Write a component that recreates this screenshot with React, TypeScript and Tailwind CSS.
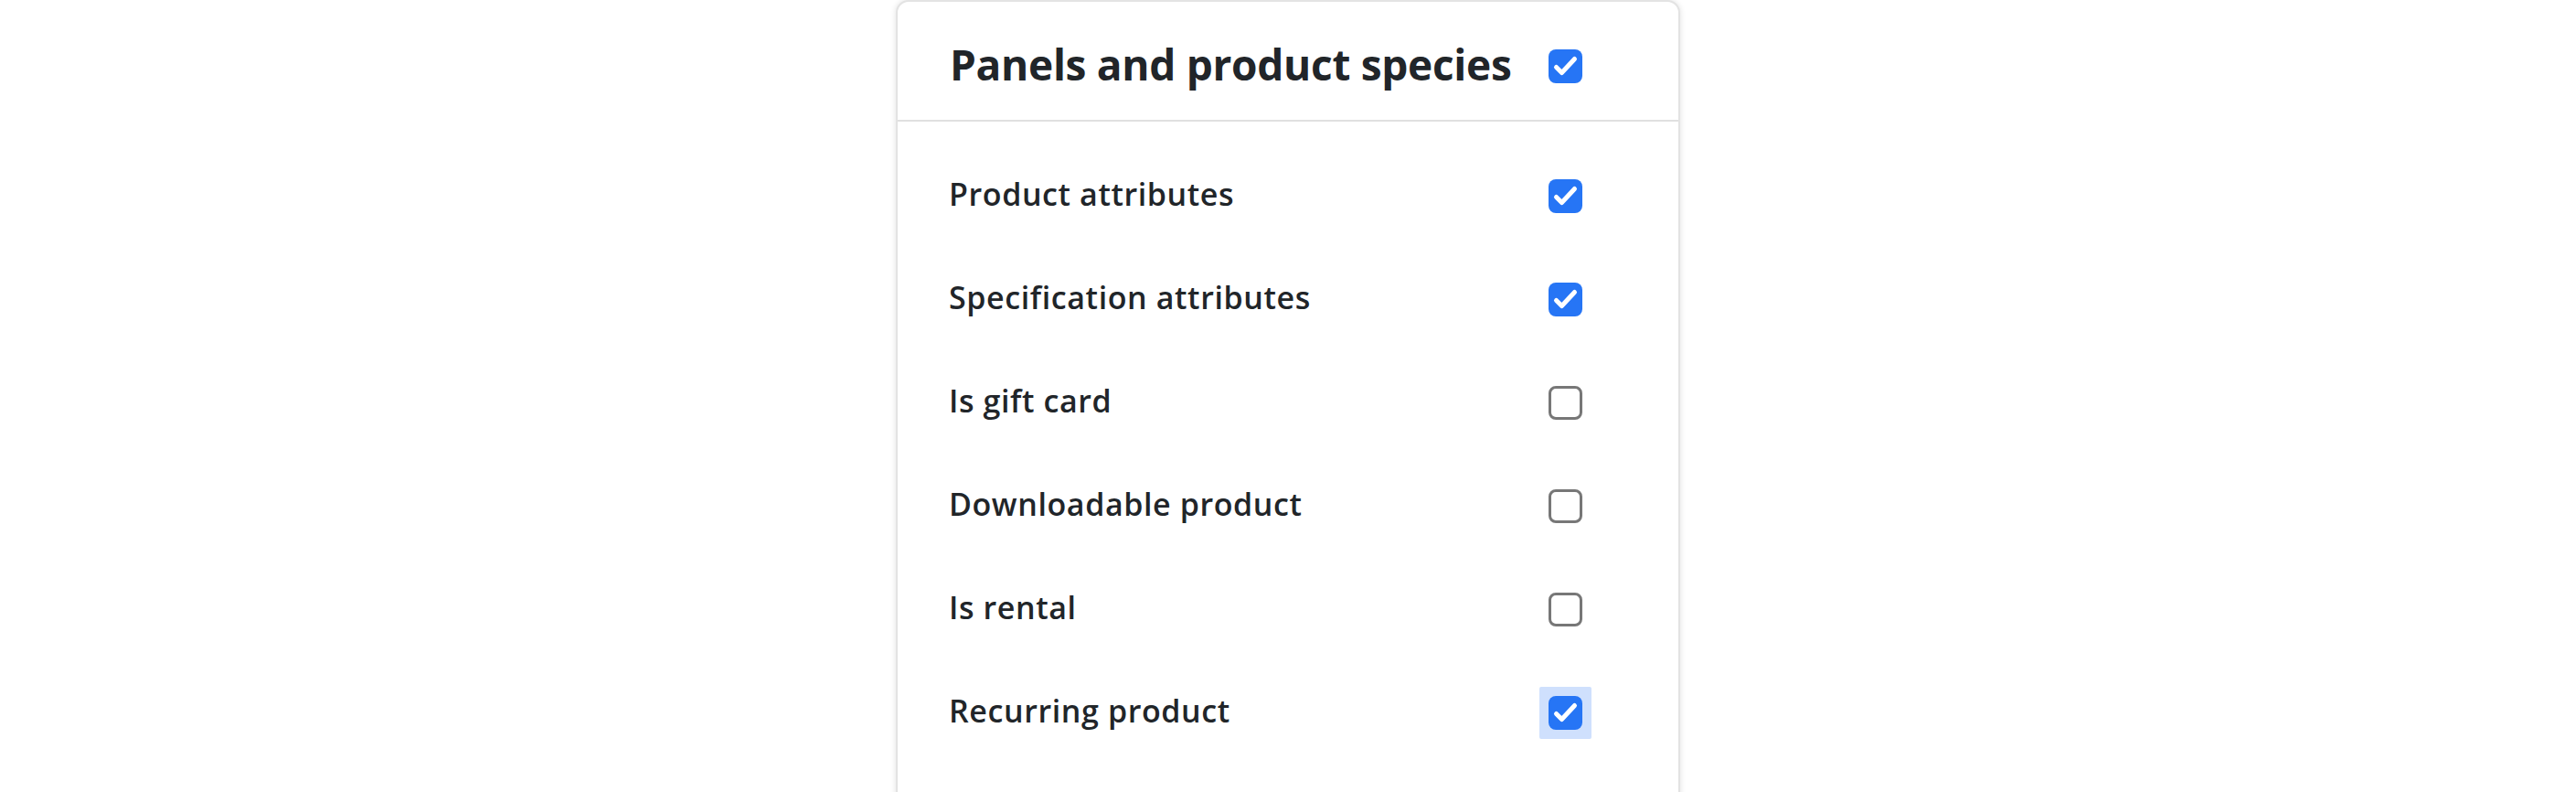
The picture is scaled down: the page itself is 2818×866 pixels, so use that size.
import { useState } from "react";

const rows = [
  { label: "Product attributes", checked: true },
  { label: "Specification attributes", checked: true },
  { label: "Is gift card", checked: false },
  { label: "Downloadable product", checked: false },
  { label: "Is rental", checked: false },
  { label: "Recurring product", checked: true, focused: true },
];

function Check({ checked, focused, onClick }: { checked: boolean; focused?: boolean; onClick: () => void }) {
  const box = (
    <button
      onClick={onClick}
      className={`w-[37px] h-[37px] shrink-0 rounded-[8px] flex items-center justify-center ${
        checked ? "bg-[#2675f5]" : "bg-white border-[3px] border-[#777777]"
      }`}
    >
      {checked && (
        <svg viewBox="0 0 37 37" className="w-[37px] h-[37px]" fill="none">
          <path d="M8.5 19.5L14.5 25.5L28.5 10.5" stroke="#fff" strokeWidth={5} strokeLinecap="round" strokeLinejoin="round" />
        </svg>
      )}
    </button>
  );
  if (!focused) return box;
  return <span className="-m-[10px] p-[10px] bg-[#cfe0fd] rounded-[2px] flex">{box}</span>;
}

export default function App() {
  const [all, setAll] = useState(true);
  const [items, setItems] = useState(rows.map((r) => r.checked));

  return (
    <div className="min-h-[866px] bg-white font-['Open_Sans',sans-serif] text-[#212529] overflow-hidden">
      <div className="w-[858px] mx-auto bg-white border-2 border-[#e3e3e3] rounded-t-[14px] shadow-[0_0_6px_rgba(0,0,0,0.12)] min-h-[880px]">
        <div className="h-[131px] flex items-center pt-[12px] pl-[57px] pr-[105px] border-b-2 border-[#e0e0e0]">
          <h2 className="flex-1 text-[46px] leading-none font-bold tracking-[-0.3px] -mt-[5px]">Panels and product species</h2>
          <Check checked={all} onClick={() => setAll(!all)} />
        </div>
        <ul className="pt-[25px]">
          {rows.map((r, i) => (
            <li key={r.label} className="h-[113px] flex items-center pl-[56px] pr-[105px]">
              <span className="flex-1 text-[34px] leading-none font-semibold tracking-[0.6px] -mt-[6px]">{r.label}</span>
              <Check
                checked={items[i]}
                focused={r.focused}
                onClick={() => setItems(items.map((v, j) => (j === i ? !v : v)))}
              />
            </li>
          ))}
        </ul>
      </div>
    </div>
  );
}
